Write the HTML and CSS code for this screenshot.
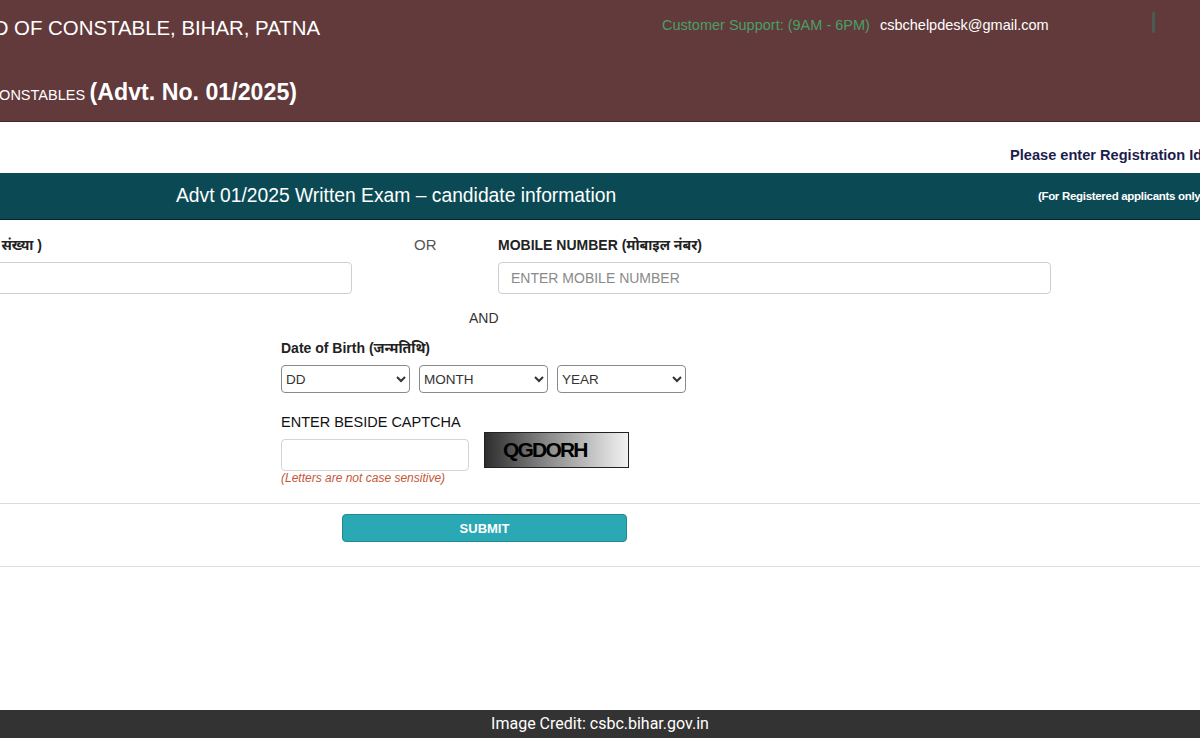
FILE: index.html
```html
<!DOCTYPE html>
<html lang="en">
<head>
    <meta charset="UTF-8">
    <meta name="viewport" content="width=device-width, initial-scale=1.0">
    <title>CSBC Bihar - Candidate Information</title>
    <link rel="stylesheet" href="styles.css">
</head>
<body>
    <header class="top-bar">
        <div class="brand">
            <div class="brand-name"><span>CENTRAL SELECTION BOARD OF CONSTABLE, BIHAR, PATNA</span></div>
            <div class="brand-sub"><span><span class="brand-small">RECRUITMENT OF CONSTABLES</span> <b>(Advt. No. 01/2025)</b></span></div>
        </div>
        <div class="support">
            <span class="support-label">Customer Support: (9AM - 6PM)</span>
            <span class="support-mail">csbchelpdesk@gmail.com</span>
        </div>
        <div class="top-divider"></div>
    </header>

    <main class="page">
        <div class="notice">Please enter Registration Id or Mobile Number and Date of Birth</div>

        <div class="form-bar">
            <span class="form-title">Advt 01/2025 Written Exam &ndash; candidate information</span>
            <span class="form-note">(For Registered applicants only)</span>
        </div>

        <div class="id-row">
            <div class="field field-reg">
                <div class="label-cut"><span>REGISTRATION NUMBER (पंजीकरण संख्या )</span></div>
                <input type="text" class="text-input">
            </div>
            <div class="or-text">OR</div>
            <div class="field field-mobile">
                <div class="field-label">MOBILE NUMBER (मोबाइल नंबर)</div>
                <input type="text" class="text-input" placeholder="ENTER MOBILE NUMBER">
            </div>
        </div>

        <div class="and-text">AND</div>

        <div class="dob-block">
            <div class="field-label">Date of Birth (जन्मतिथि)</div>
            <div class="dob-selects">
                <select class="dob-select"><option>DD</option></select>
                <select class="dob-select"><option>MONTH</option></select>
                <select class="dob-select"><option>YEAR</option></select>
            </div>
        </div>

        <div class="captcha-block">
            <div class="captcha-label">ENTER BESIDE CAPTCHA</div>
            <div class="captcha-row">
                <div class="captcha-col">
                    <input type="text" class="text-input captcha-input">
                    <div class="captcha-hint">(Letters are not case sensitive)</div>
                </div>
                <div class="captcha-img">QGDORH</div>
            </div>
        </div>

        <div class="rule rule-top"></div>
        <div class="submit-row">
            <button class="submit-btn">SUBMIT</button>
        </div>
        <div class="rule"></div>
    </main>

    <footer class="credit">Image Credit: csbc.bihar.gov.in</footer>
</body>
</html>
```

FILE: styles.css
```css
html, body {
    margin: 0;
    height: 100%;
}
body {
    font-family: "Liberation Sans", Arial, "Noto Sans", sans-serif;
    background: #fff;
    color: #222;
    display: flex;
    flex-direction: column;
    overflow: hidden;
}
.top-bar {
    background-color: #623a3b;
    border-bottom: 1px solid #45262a;
    height: 121px;
    display: flex;
    align-items: flex-start;
    color: #fff;
    flex-shrink: 0;
}
.brand {
    width: 320px;
    padding-top: 17px;
}
.brand-name, .brand-sub {
    display: flex;
    justify-content: flex-end;
    white-space: nowrap;
}
.brand-name {
    font-size: 20.4px;
    line-height: 23px;
}
.brand-sub {
    margin-top: 39px;
    padding-right: 23px;
    line-height: 26px;
}
.brand-small {
    font-size: 14.5px;
}
.brand-sub b {
    font-size: 23.2px;
}
.support {
    margin-left: 342px;
    padding-top: 16px;
    font-size: 14.5px;
    line-height: 18px;
    white-space: nowrap;
}
.support-label {
    color: #48a066;
    margin-right: 6px;
}
.support-mail {
    color: #fff;
}
.top-divider {
    width: 3px;
    height: 21px;
    margin: 12px 0 0 103px;
    background: #4b5a55;
    border-radius: 1px;
}
.page {
    flex: 1;
}
.notice {
    padding: 25px 0 10px 1010px;
    font-size: 14.6px;
    line-height: 16px;
    font-weight: bold;
    color: #1d1d4d;
    white-space: nowrap;
}
.form-bar {
    background-color: #0b4a55;
    border-bottom: 1px solid #05262c;
    height: 46px;
    display: flex;
    align-items: center;
    padding-left: 176px;
    white-space: nowrap;
    color: #fff;
}
.form-title {
    font-size: 19.3px;
}
.form-note {
    margin-left: auto;
    margin-right: -4px;
    font-size: 11.5px;
    font-weight: bold;
    letter-spacing: -0.3px;
}
.id-row {
    display: flex;
    align-items: flex-start;
    margin-top: 15px;
}
.field-label, .label-cut {
    font-size: 14px;
    line-height: 20px;
    font-weight: bold;
    color: #222;
    white-space: nowrap;
}
.field-reg {
    margin-left: -60px;
    width: 412px;
}
.label-cut {
    width: 102px;
    display: flex;
    justify-content: flex-end;
}
.text-input {
    display: block;
    box-sizing: border-box;
    width: 100%;
    height: 32px;
    margin-top: 7px;
    padding: 0 12px;
    border: 1px solid #cfcfcf;
    border-radius: 4px;
    font-family: inherit;
    font-size: 14px;
    color: #333;
}
.text-input::placeholder {
    color: #8a8a8a;
}
.or-text {
    margin-left: 62px;
    width: 84px;
    font-size: 15px;
    line-height: 20px;
    color: #555;
}
.field-mobile {
    width: 553px;
}
.and-text {
    margin-top: 14px;
    padding-left: 469px;
    font-size: 14px;
    line-height: 20px;
    color: #333;
}
.dob-block, .captcha-block {
    padding-left: 281px;
}
.dob-block {
    margin-top: 10px;
}
.dob-selects {
    display: flex;
    gap: 9px;
    margin-top: 7px;
}
.dob-select {
    width: 129px;
    height: 28px;
    border: 1px solid #8a8a8a;
    border-radius: 4px;
    background: #fff;
    font-family: inherit;
    font-size: 13.5px;
    color: #333;
    padding: 0;
}
.captcha-block {
    margin-top: 20px;
}
.captcha-label {
    font-size: 14.5px;
    line-height: 19px;
    color: #111;
}
.captcha-row {
    display: flex;
    align-items: flex-start;
    gap: 15px;
}
.captcha-col {
    width: 188px;
}
.captcha-input {
    margin-top: 7px;
    border-color: #d4d4d4;
}
.captcha-hint {
    font-size: 12px;
    line-height: 14px;
    font-style: italic;
    color: #c5573a;
}
.captcha-img {
    box-sizing: border-box;
    width: 145px;
    height: 36px;
    border: 1px solid #222;
    background: linear-gradient(to right, #2e2e2e 0%, #8c8c8c 45%, #f2f2f2 100%);
    padding-left: 18px;
    font-size: 21px;
    line-height: 34px;
    font-weight: bold;
    letter-spacing: -1.8px;
    color: #000;
}
.rule {
    height: 1px;
    background: #dcdcdc;
}
.rule-top {
    margin-top: 18px;
}
.submit-row {
    padding: 10px 0 24px 342px;
}
.submit-btn {
    display: block;
    width: 285px;
    height: 28px;
    background-color: #2aa8b3;
    border: 1px solid #1f8a93;
    border-radius: 4px;
    color: #fff;
    font-family: inherit;
    font-size: 13px;
    font-weight: bold;
    cursor: pointer;
}
.credit {
    flex-shrink: 0;
    height: 28px;
    background: #333;
    color: #fff;
    font-family: Roboto, "Liberation Sans", sans-serif;
    font-size: 16px;
    line-height: 28px;
    text-align: center;
}
```
